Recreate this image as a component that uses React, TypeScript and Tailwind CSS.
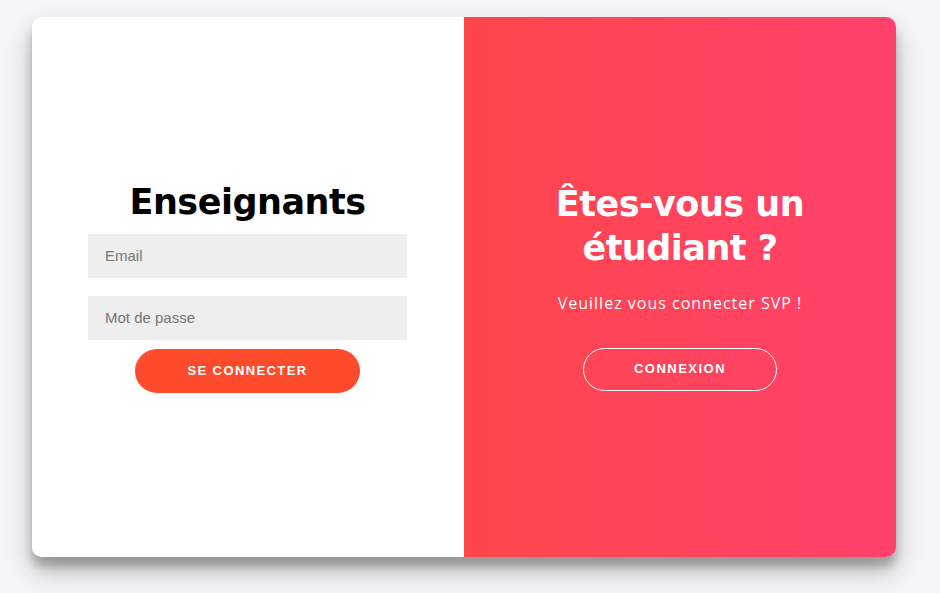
export default function App() {
  return (
    <div className="w-full h-[593px] bg-[#f6f5f7] pt-[17px] pl-[32px]">
      <div className="w-[864px] h-[540px] rounded-[10px] overflow-hidden flex shadow-[0_14px_28px_rgba(0,0,0,0.25),0_10px_10px_rgba(0,0,0,0.22)]">
        <div className="w-[432px] h-full bg-white flex flex-col items-center justify-center pl-[56px] pr-[57px] pb-[2px]">
          <h1 className="text-[35px] leading-[44px] font-extrabold text-black [font-family:'DejaVu_Sans',sans-serif] tracking-[-0.5px] mb-[10px]">
            Enseignants
          </h1>
          <input
            placeholder="Email"
            className="w-full h-[44px] bg-[#eee] px-[17px] text-[15px] outline-none [font-family:'Liberation_Sans',Arial,sans-serif] placeholder:text-[#757575]"
          />
          <input
            type="password"
            placeholder="Mot de passe"
            className="w-full h-[44px] bg-[#eee] px-[17px] mt-[18px] text-[15px] outline-none [font-family:'Liberation_Sans',Arial,sans-serif] placeholder:text-[#757575]"
          />
          <button className="mt-[9px] w-[225px] h-[44px] rounded-full bg-[#ff4b2b] text-white text-[13px] font-bold uppercase tracking-[1.4px] [font-family:'Liberation_Sans',Arial,sans-serif]">
            Se connecter
          </button>
        </div>
        <div className="w-[432px] h-full bg-[linear-gradient(to_right,#ff464b,#ff416c)] flex flex-col items-center justify-center text-white text-center px-[40px] pb-[2px]">
          <h1 className="text-[35px] leading-[44px] font-extrabold [font-family:'DejaVu_Sans',sans-serif] tracking-[-0.5px]">
            Êtes-vous un
            <br />
            étudiant ?
          </h1>
          <p className="mt-[23px] text-[16px] leading-[20px] font-normal [font-family:'Open_Sans',sans-serif] tracking-[1px]">
            Veuillez vous connecter SVP !
          </p>
          <button className="mt-[35px] w-[194px] h-[43px] rounded-full border border-white bg-transparent text-white text-[13px] font-bold uppercase tracking-[1.5px] [font-family:'Liberation_Sans',Arial,sans-serif]">
            Connexion
          </button>
        </div>
      </div>
    </div>
  );
}
